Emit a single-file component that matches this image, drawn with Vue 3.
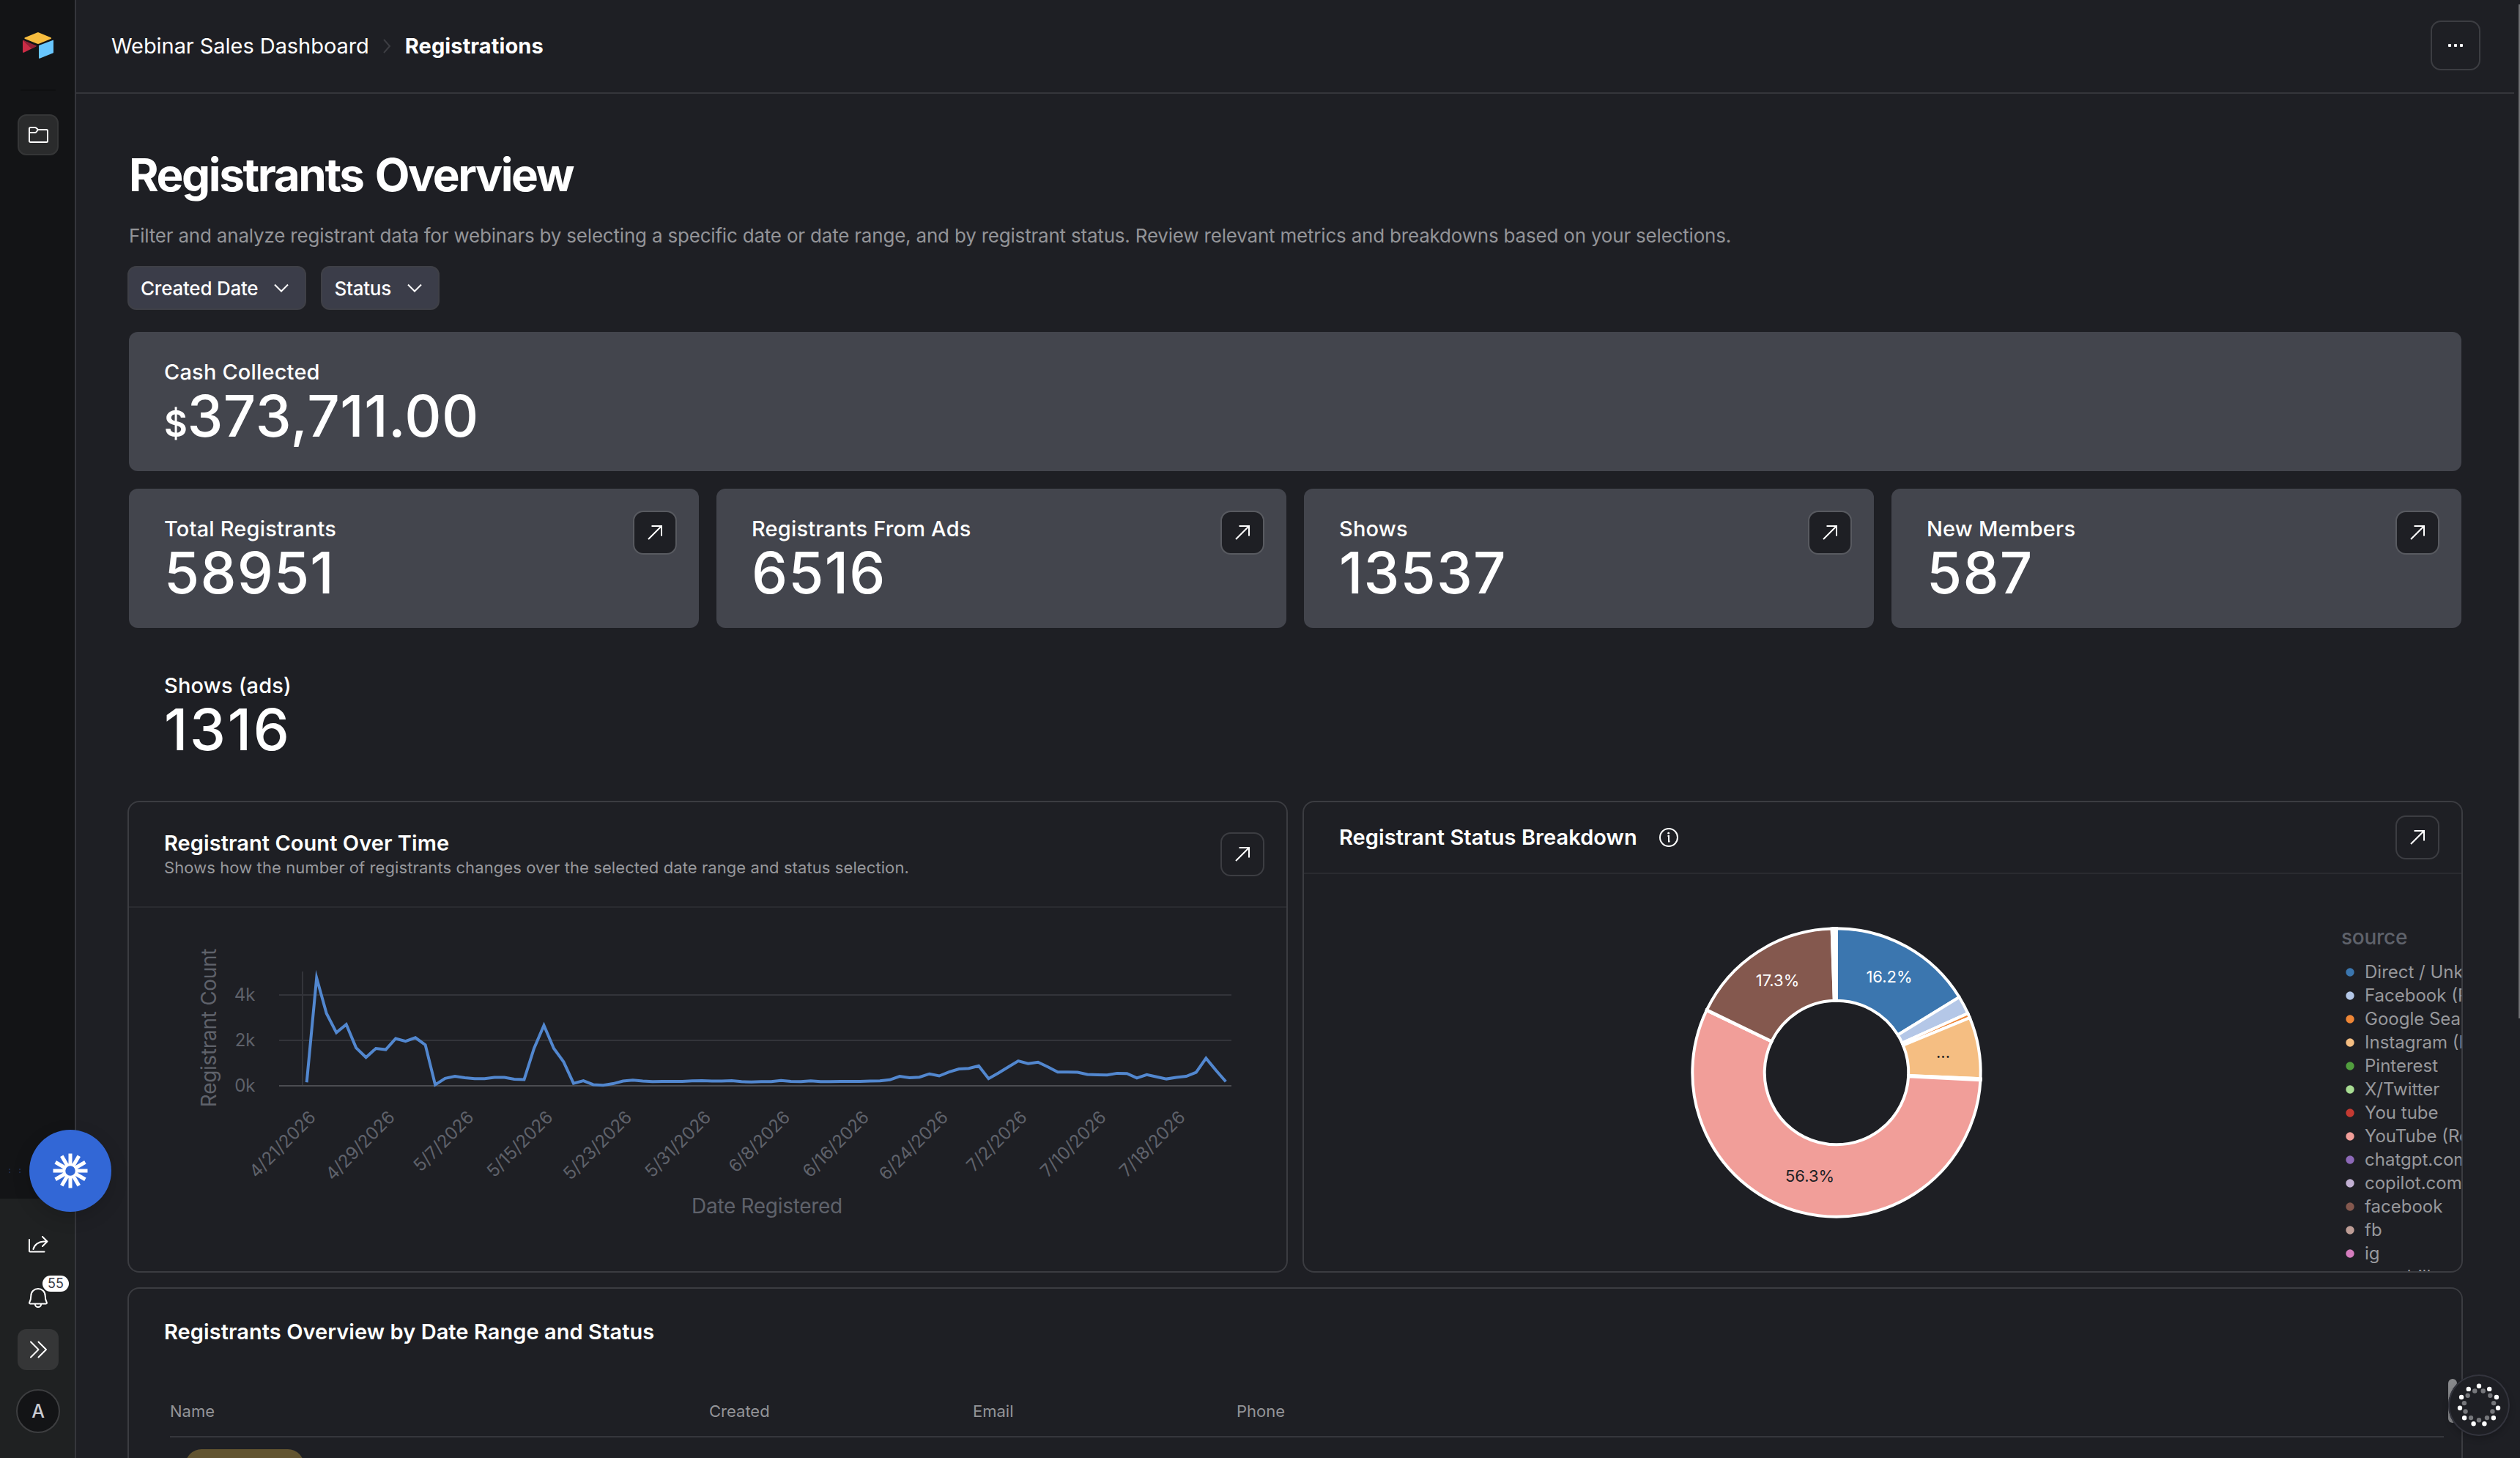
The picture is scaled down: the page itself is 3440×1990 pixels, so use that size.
<script setup>
import { ref, computed } from 'vue';

const filters = ref(['Created Date', 'Status']);

const stats = ref([
  { label: 'Total Registrants', value: '58951' },
  { label: 'Registrants From Ads', value: '6516' },
  { label: 'Shows', value: '13537' },
  { label: 'New Members', value: '587' },
]);

const columns = ['Name', 'Created', 'Email', 'Phone'];

// registrants per day, starting 4/21/2026
const counts = [
  150, 4753, 3186, 2340, 2700, 1669, 1247, 1642, 1590, 2078, 1959, 2117, 1800,
  40, 323, 415, 350, 310, 310, 363, 363, 284, 270, 1642, 2660, 1642, 1049, 99,
  218, 46, 20, 86, 204, 244, 204, 178, 190, 190, 190, 211, 218, 204, 204, 218,
  178, 165, 178, 178, 231, 191, 178, 211, 178, 178, 191, 191, 191, 204, 211,
  257, 415, 350, 376, 521, 429, 600, 732, 758, 877, 310, 560, 824, 1088, 970,
  1036, 824, 600, 600, 587, 495, 482, 468, 547, 534, 336, 482, 389, 297, 363,
  415, 587, 1207, 679, 178,
];

const dayStep = 13.49;

const linePoints = computed(() =>
  counts
    .map((n, i) => `${(242.7 + i * dayStep).toFixed(1)},${(242.8 - n * 0.03095).toFixed(1)}`)
    .join(' ')
);

const yTicks = [
  { label: '4k', y: 119 },
  { label: '2k', y: 181 },
  { label: '0k', y: 243 },
];

const xTicks = [
  '4/21/2026', '4/29/2026', '5/7/2026', '5/15/2026', '5/23/2026', '5/31/2026',
  '6/8/2026', '6/16/2026', '6/24/2026', '7/2/2026', '7/10/2026', '7/18/2026',
];

// start and end are degrees, clockwise from the top
const sources = [
  { name: 'Direct / Unknown', color: '#3b76af', start: 0, end: 58.4 },
  { name: 'Facebook (Referral)', color: '#b4c7e7', start: 58.4, end: 65.7 },
  { name: 'Google Search', color: '#ef8636', start: 65.7, end: 67.6 },
  { name: 'Instagram (Referral)', color: '#f5be82', start: 67.6, end: 92.4 },
  { name: 'Pinterest', color: '#519e3e', start: 92.4, end: 92.6 },
  { name: 'X/Twitter', color: '#a8dc93', start: 92.6, end: 92.8 },
  { name: 'You tube', color: '#c53a32', start: 92.8, end: 93 },
  { name: 'YouTube (Referral)', color: '#f19e99', start: 93, end: 295.6 },
  { name: 'chatgpt.com', color: '#8d69b8', start: 295.6, end: 295.7 },
  { name: 'copilot.com', color: '#c2b0d3', start: 295.7, end: 295.8 },
  { name: 'facebook', color: '#84584e', start: 295.8, end: 358.15 },
  { name: 'fb', color: '#be9d96', start: 358.15, end: 358.8 },
  { name: 'ig', color: '#d57dbe', start: 358.8, end: 359.4 },
  { name: 'mandrill', color: '#eeb8d1', start: 359.4, end: 360 },
];

function polar(r, deg) {
  const a = (deg * Math.PI) / 180;
  return `${(727 + r * Math.sin(a)).toFixed(2)} ${(271 - r * Math.cos(a)).toFixed(2)}`;
}

function arc(s) {
  const outer = 196.7;
  const inner = 98.3;
  const large = s.end - s.start > 180 ? 1 : 0;
  return (
    `M${polar(outer, s.start)} A${outer} ${outer} 0 ${large} 1 ${polar(outer, s.end)} ` +
    `L${polar(inner, s.end)} A${inner} ${inner} 0 ${large} 0 ${polar(inner, s.start)} Z`
  );
}

function ring(r, offset) {
  return Array.from({ length: 11 }, (_, i) => {
    const a = ((i + offset) * 2 * Math.PI) / 11;
    return { x: 42 + r * Math.sin(a), y: 42 - r * Math.cos(a) };
  });
}

const outerDots = ring(26.3, 0);
const innerDots = ring(20.3, 0.5);
</script>

<template>
  <div class="app">
    <aside class="sidebar">
      <svg width="42" height="36" viewBox="0 0 42 36">
        <path fill="#f7bd3f" d="M19 .7 3 7.2c-.9.4-.9 1.300 0 1.700l16.200 6.600c1.200.5 2.400.5 3.600 0L38.500 9c.9-.4.9-1.300 0-1.700L22.700.7c-1.200-.5-2.500-.5-3.700 0Z" />
        <path fill="#68c6fd" d="M22 18.500v16.600c0 .7.500 1 1.200.7l18-7.200c.5-.2.800-.6.800-1.100V11.600c0-.7-.5-1-1.200-.7l-18 6.900c-.5.200-.8.300-.8.700Z" />
        <path fill="#cb2c46" d="M18.500 19.200 1.500 27.700c-.8.400-1.500 0-1.500-.8V12.200c0-.8.800-1.300 1.500-1Z" />
        <path fill="#8f2236" d="M18.500 19.200 12 22.400.5 11.400c.3-.3.700-.3 1-.2l17 7c.6.200.6.700 0 1Z" />
      </svg>
      <div class="side-rule"></div>
      <button class="side-button folder">
        <svg width="28" height="24" viewBox="0 0 28 24">
          <path d="M2 9V3.500C2 2.700 2.700 2 3.500 2h6.300c.6 0 1.100.2 1.500.6L14 5h11.500c.8 0 1.500.7 1.500 1.500v14c0 .8-.7 1.500-1.500 1.500h-22C2.700 22 2 21.300 2 20.500V9h7.800c.6 0 1.100-.2 1.500-.6L14 5" />
        </svg>
      </button>

      <div class="side-bottom">
        <svg class="share" width="28" height="24" viewBox="0 0 28 24">
          <path d="M2 5v15.500c0 .6.400 1 1 1h19.500M20 1l6.500 6.500L20 14M26.500 7.500H22c-7 0-13 4-14.600 10.500" />
        </svg>
        <div class="bell">
          <svg width="26" height="30" viewBox="0 0 26 30">
            <path d="M3.300 11.500C3.300 6 7.600 2 13 2s9.700 4 9.700 9.500c0 5 1.200 7.700 2.100 9.300.4.700 0 1.600-.9 1.600H2.100c-.9 0-1.300-.9-.9-1.600.9-1.600 2.100-4.300 2.100-9.300ZM8.800 22.600a4.200 4.500 0 0 0 8.400 0" />
          </svg>
          <span class="badge">55</span>
        </div>
        <button class="side-button expand">
          <svg width="28" height="26" viewBox="0 0 28 26">
            <path d="m4 2.500 10.500 10.500L4 23.500M14.500 2.500 25 13 14.500 23.500" />
          </svg>
        </button>
        <div class="avatar">A</div>
      </div>
    </aside>

    <main class="main">
      <header class="topbar">
        <nav class="crumbs">
          <span class="crumb">Webinar Sales Dashboard</span>
          <svg width="12" height="20" viewBox="0 0 12 20"><path d="m2 1 8 9-8 9" /></svg>
          <span class="crumb current">Registrations</span>
        </nav>
        <button class="more"><i></i><i></i><i></i></button>
      </header>

      <section class="content">
        <h1>Registrants Overview</h1>
        <p class="description">
          Filter and analyze registrant data for webinars by selecting a specific date or date range, and by registrant status. Review relevant metrics and breakdowns based on your selections.
        </p>

        <div class="filters">
          <button v-for="filter in filters" :key="filter" class="filter">
            {{ filter }}
            <svg width="20" height="12" viewBox="0 0 20 12"><path d="m1 1.500 9 9 9-9" /></svg>
          </button>
        </div>

        <div class="stat">
          <div class="stat-label">Cash Collected</div>
          <div class="stat-value money"><small>$</small>373,711.00</div>
        </div>

        <div class="stat-row">
          <div v-for="stat in stats" :key="stat.label" class="stat">
            <div class="stat-label">{{ stat.label }}</div>
            <div class="stat-value">{{ stat.value }}</div>
            <button class="open">
              <svg width="24" height="24" viewBox="0 0 24 24"><path d="M3 21 21 3M7.500 3H21v13.500" /></svg>
            </button>
          </div>
        </div>

        <div class="stat plain">
          <div class="stat-label">Shows (ads)</div>
          <div class="stat-value">1316</div>
        </div>

        <div class="charts">
          <div class="panel">
            <div class="panel-head tall">
              <div class="panel-text">
                <div class="panel-title">Registrant Count Over Time</div>
                <div class="panel-sub">Shows how the number of registrants changes over the selected date range and status selection.</div>
              </div>
              <button class="open">
                <svg width="24" height="24" viewBox="0 0 24 24"><path d="M3 21 21 3M7.500 3H21v13.500" /></svg>
              </button>
            </div>
            <svg width="1580" height="496" viewBox="0 0 1580 496">
              <line class="grid" x1="237" x2="237" y1="87" y2="243" />
              <g v-for="tick in yTicks" :key="tick.label">
                <line class="grid" :class="{ base: tick.label === '0k' }" x1="205" x2="1505" :y1="tick.y" :y2="tick.y" />
                <text class="tick" x="172.500" :y="tick.y + 8" text-anchor="end">{{ tick.label }}</text>
              </g>
              <text
                v-for="(label, i) in xTicks"
                :key="label"
                class="tick"
                text-anchor="end"
                :transform="`translate(${250.5 + i * 107.9} 281.5) rotate(-45)`"
                y="8.500"
              >
                {{ label }}
              </text>
              <text class="axis-title" text-anchor="middle" transform="translate(119 164) rotate(-90)">Registrant Count</text>
              <text class="axis-title" text-anchor="middle" x="871" y="417">Date Registered</text>
              <polyline class="line" :points="linePoints" />
            </svg>
          </div>

          <div class="panel">
            <div class="panel-head">
              <div class="panel-title with-info">
                Registrant Status Breakdown
                <svg width="28" height="28" viewBox="0 0 28 28">
                  <circle cx="14" cy="14" r="12" />
                  <path d="M12.500 12H14v7.500h1.500" />
                  <circle class="dot" cx="13.700" cy="8.200" r="1.400" />
                </svg>
              </div>
              <button class="open">
                <svg width="24" height="24" viewBox="0 0 24 24"><path d="M3 21 21 3M7.500 3H21v13.500" /></svg>
              </button>
            </div>
            <svg width="1580" height="542" viewBox="0 0 1580 542">
              <path v-for="s in sources" :key="s.name" class="slice" :d="arc(s)" :fill="s.color" />
              <text class="slice-label light" x="799" y="148">16.2%</text>
              <text class="slice-label light" x="646.500" y="153">17.3%</text>
              <text class="slice-label" x="690.500" y="420">56.3%</text>
              <text class="slice-label" x="872.500" y="250.500">...</text>
              <text class="legend-title" x="1416" y="96">source</text>
              <g v-for="(s, i) in sources" :key="s.name">
                <circle cx="1428" :cy="134 + i * 32" r="5.700" :fill="s.color" />
                <text class="legend-item" x="1448" :y="142 + i * 32">{{ s.name }}</text>
              </g>
            </svg>
          </div>
        </div>

        <div class="panel table-panel">
          <div class="panel-title">Registrants Overview by Date Range and Status</div>
          <div class="table-head">
            <span v-for="column in columns" :key="column">{{ column }}</span>
          </div>
          <div class="pill"></div>
          <div class="table-scroll"></div>
        </div>
      </section>
    </main>

    <div class="page-scroll"></div>
    <div class="drag"></div>

    <button class="assistant">
      <svg width="48" height="48" viewBox="0 0 48 48">
        <rect v-for="n in 12" :key="n" x="21.500" y=".5" width="5" height="16" :transform="`rotate(${n * 30} 24 24)`" />
        <circle cx="24" cy="24" r="8.500" />
      </svg>
    </button>

    <div class="widget">
      <svg width="84" height="84" viewBox="0 0 84 84">
        <circle v-for="(d, i) in innerDots" :key="'in' + i" :cx="d.x" :cy="d.y" r="3.200" fill="#76777b" />
        <circle v-for="(d, i) in outerDots" :key="'out' + i" :cx="d.x" :cy="d.y" r="3.200" fill="#fff" />
      </svg>
    </div>
  </div>
</template>

<style>
body {
  margin: 0;
  background: #1e1f24;
}
</style>

<style scoped>
.app {
  position: relative;
  display: flex;
  height: 1990px;
  overflow: hidden;
  background: #1e1f24;
  color: #fff;
  font-family: Inter, "Liberation Sans", sans-serif;
}

.app * {
  box-sizing: border-box;
}

button {
  padding: 0;
  border: none;
  background: none;
  color: inherit;
  font: inherit;
}

svg {
  display: block;
  flex: none;
  fill: none;
}

.sidebar {
  display: flex;
  flex-direction: column;
  align-items: center;
  flex: none;
  width: 104px;
  padding: 44px 0 0 2px;
  border-right: 2px solid #35363b;
  background: #131416;
}

.side-rule {
  width: 48px;
  height: 2px;
  margin: 42px 0 32px;
  background: #0f1011;
}

.side-button {
  display: flex;
  align-items: center;
  justify-content: center;
  width: 56px;
  height: 56px;
  border-radius: 12px;
}

.side-button svg,
.share,
.bell svg {
  stroke: #fff;
  stroke-width: 2;
  stroke-linejoin: round;
  stroke-linecap: round;
}

.folder {
  border: 2px solid #353637;
  background: #2a2b2c;
}

.side-bottom {
  display: flex;
  flex-direction: column;
  align-items: center;
  align-self: stretch;
  height: 354px;
  margin: auto 0 0 -2px;
  padding: 51px 0 0 2px;
  background: #1f2122;
}

.bell {
  position: relative;
  margin-top: 46px;
}

.badge {
  position: absolute;
  top: -16px;
  left: 19px;
  width: 36px;
  height: 22px;
  border-radius: 11px;
  background: #fff;
  color: #3a3b45;
  font-size: 18px;
  line-height: 22px;
  text-align: center;
}

.expand {
  margin-top: 27px;
  background: #353637;
}

.avatar {
  width: 60px;
  height: 60px;
  margin-top: 26px;
  border: 2px solid #3d3e40;
  border-radius: 50%;
  background: #131416;
  color: #c9cbd1;
  font-size: 25px;
  font-weight: 500;
  line-height: 57px;
  text-align: center;
}

.main {
  flex: 1;
  min-width: 0;
}

.topbar {
  display: flex;
  align-items: center;
  justify-content: space-between;
  height: 128px;
  margin-right: 8px;
  padding: 0 46px 2px 48px;
  border-bottom: 2px solid #35363b;
}

.crumbs {
  display: flex;
  align-items: center;
  padding-top: 1px;
  font-size: 29px;
  line-height: 36px;
}

.crumbs svg {
  margin: 0 19px 0 18px;
  stroke: #3d3e43;
  stroke-width: 2;
}

.crumb {
  letter-spacing: -0.002em;
}

.current {
  font-weight: 700;
  letter-spacing: 0.003em;
}

.more {
  display: flex;
  align-items: center;
  justify-content: center;
  gap: 4px;
  width: 68px;
  height: 68px;
  border: 2px solid #3c3d42;
  border-radius: 14px;
}

.more i {
  width: 4px;
  height: 4px;
  border-radius: 1px;
  background: #fff;
}

.content {
  padding: 73px 80px 0 72px;
}

h1 {
  margin: 0;
  font-size: 62px;
  font-weight: 700;
  line-height: 76px;
  letter-spacing: -0.039em;
  word-spacing: 0.06em;
}

.description {
  margin: 27px 0 23px;
  color: #939498;
  font-size: 26px;
  line-height: 36px;
  letter-spacing: -0.0077em;
  white-space: nowrap;
}

.filters {
  display: flex;
  gap: 20px;
  margin: 0 0 30px -2px;
}

.filter {
  display: flex;
  align-items: center;
  gap: 22px;
  height: 60px;
  padding: 0 22px 0 16px;
  border: 2px solid #3f4047;
  border-radius: 12px;
  background: #3b3d49;
  font-size: 26px;
  font-weight: 500;
  letter-spacing: -0.009em;
}

.filter svg {
  stroke: #fff;
  stroke-width: 2;
}

.stat {
  position: relative;
  height: 190px;
  padding: 37px 48px 0;
  border-radius: 12px;
  background: #43454d;
}

.stat-label {
  font-size: 29px;
  font-weight: 500;
  line-height: 36px;
  letter-spacing: 0.006em;
}

.stat-value {
  margin-top: 2px;
  font-size: 78px;
  font-weight: 500;
  line-height: 80px;
  letter-spacing: 0.015em;
}

.money {
  letter-spacing: 0.007em;
}

.stat-value small {
  font-size: 49px;
  font-weight: 600;
  letter-spacing: -0.01em;
}

.stat-row {
  display: grid;
  grid-template-columns: repeat(4, 1fr);
  gap: 24px;
  margin: 24px 0;
}

.plain {
  background: none;
}

.plain .stat-value {
  letter-spacing: 0.035em;
}

.open {
  display: flex;
  align-items: center;
  justify-content: center;
  flex: none;
  width: 60px;
  height: 60px;
  border: 2px solid #3c3d42;
  border-radius: 14px;
  background: #1e1f24;
}

.open svg {
  stroke: #fff;
  stroke-width: 2;
}

.stat .open {
  position: absolute;
  top: 30px;
  right: 30px;
  border-color: #585a60;
}

.charts {
  display: grid;
  grid-template-columns: 1fr 1fr;
  gap: 20px;
  margin: 22px -2px 20px;
}

.panel {
  overflow: hidden;
  border: 2px solid #3b3c41;
  border-radius: 16px;
}

.charts .panel {
  height: 644px;
}

.panel-head {
  display: flex;
  align-items: center;
  justify-content: space-between;
  height: 98px;
  padding: 0 30px 0 48px;
  border-bottom: 2px solid #2a2b30;
}

.tall {
  height: 144px;
}

.panel-text {
  padding-bottom: 1px;
}

.panel-title {
  font-size: 29px;
  font-weight: 600;
  line-height: 36px;
  letter-spacing: 0.002em;
}

.panel-sub {
  color: #97989c;
  font-size: 22px;
  line-height: 30px;
  letter-spacing: 0.004em;
}

.with-info {
  display: flex;
  align-items: center;
  gap: 29px;
}

.with-info svg {
  stroke: #fff;
  stroke-width: 2;
}

.with-info .dot {
  fill: #fff;
  stroke: none;
}

.grid {
  stroke: #33343a;
  stroke-width: 2;
}

.grid.base {
  stroke: #4b4c51;
}

.tick {
  fill: #5f626b;
  font-size: 24px;
}

.axis-title {
  fill: #5f626b;
  font-size: 28px;
  letter-spacing: -0.011em;
}

.line {
  stroke: #5287cf;
  stroke-width: 4;
  stroke-miterlimit: 10;
}

.slice {
  stroke: #fff;
  stroke-width: 4;
}

.slice-label {
  fill: #1e1f24;
  font-size: 22px;
  text-anchor: middle;
}

.slice-label.light {
  fill: #fff;
}

.legend-title {
  fill: #5f626b;
  font-size: 28px;
  font-weight: 500;
  letter-spacing: -0.01em;
}

.legend-item {
  fill: #97989c;
  font-size: 24px;
}

.table-panel {
  position: relative;
  height: 400px;
  margin: 0 -2px;
  padding: 41px 24px 0 56px;
}

.table-panel .panel-title {
  margin-left: -8px;
}

.table-head {
  display: grid;
  grid-template-columns: 736px 360px 360px 1fr;
  height: 126px;
  padding-top: 76px;
  border-bottom: 2px solid #35363c;
  color: #939498;
  font-size: 22px;
  line-height: 28px;
}

.pill {
  width: 162px;
  height: 44px;
  margin: 16px 0 0 21px;
  border-radius: 22px;
  background: #625430;
}

.table-scroll {
  position: absolute;
  top: 123px;
  right: 6px;
  width: 12px;
  height: 60px;
  border-radius: 6px;
  background: #88898c;
}

.page-scroll {
  position: absolute;
  top: 6px;
  right: 0;
  width: 2px;
  height: 1384px;
  background: #6f7073;
}

/* dotted grip beside the assistant button */
.drag {
  position: absolute;
  top: 1595px;
  left: 12px;
  width: 16px;
  height: 6px;
  border: dotted #1c2846;
  border-width: 0 2px;
}

.assistant {
  position: absolute;
  top: 1542px;
  left: 40px;
  display: flex;
  align-items: center;
  justify-content: center;
  width: 112px;
  height: 112px;
  padding-right: 1px;
  border-radius: 50%;
  background: #3267d6;
  box-shadow: 0 8px 24px rgba(0, 0, 0, 0.15);
}

.assistant rect {
  fill: #fff;
}

.assistant circle {
  stroke: #fff;
  stroke-width: 3.5;
  fill: #3267d6;
}

.widget {
  position: absolute;
  top: 1876px;
  left: 3342px;
  width: 84px;
  height: 84px;
  border-radius: 50%;
  background: #1e1f24;
  box-shadow: inset 0 0 0 2px #33343d, 0 4px 8px rgba(0, 0, 0, 0.2);
}
</style>
